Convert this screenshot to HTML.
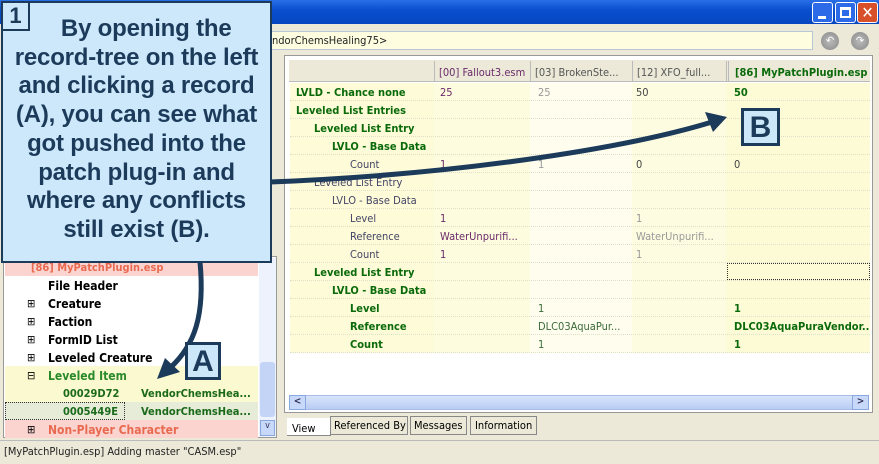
<!DOCTYPE html>
<html><head><meta charset="utf-8"><style>
*{margin:0;padding:0;box-sizing:border-box}
body{width:879px;height:464px;overflow:hidden;background:#ece9d8;font-family:"DejaVu Sans Condensed","Liberation Sans",sans-serif;font-size:11px;position:relative}
.a{position:absolute;white-space:nowrap}
.title{left:0;top:0;width:879px;height:24px;background:linear-gradient(#2a6fe6,#0a4fcf 40%,#0645c0)}
.wb{top:2px;width:21px;height:21px;border:1px solid #fff;border-radius:3px;background:#2c6ae8}
.addr{left:250px;top:31px;width:563px;height:19px;background:#fefde0;border:1px solid #b8c6d8;padding:2px 0 0 21px;font-size:11px;color:#222}
.circ{top:32px;width:18px;height:18px;border-radius:50%;background:radial-gradient(#bbb,#888);color:#fff;font-size:11px;text-align:center;line-height:18px}
.frame{left:284px;top:55px;width:589px;height:358px;border:1px solid #999;background:#fff}
.row{position:absolute;left:290px;width:580px;height:18px;border-bottom:1px dotted #e0e0c8}
.c{position:absolute;top:3px;font-size:11px}
.g{color:#0a6a0a;font-weight:bold}
.pu{color:#6a2a6a}
.gr{color:#999}
.tree{position:absolute;left:5px;width:253px;height:18px;font-weight:bold;font-size:11px;padding-top:3px}
</style></head><body>
<div class="a title"></div>
<div class="a wb" style="left:812px"><div style="position:absolute;left:5px;top:13px;width:8px;height:3px;background:#fff"></div></div>
<div class="a wb" style="left:835px"><div style="position:absolute;left:4px;top:4px;width:11px;height:11px;border:2px solid #fff;border-top-width:3px"></div></div>
<div class="a wb" style="left:857px;background:#d8502a;color:#fff;font-size:16px;text-align:center;line-height:19px;font-weight:bold">✕</div>
<div class="a addr">ndorChemsHealing75&gt;</div>
<div class="a circ" style="left:821px">↶</div>
<div class="a circ" style="left:851px">↷</div>

<div class="a frame"></div>
<div class="a" style="left:289px;top:60px;width:581px;height:22px;background:#ece9d8;border-bottom:1px solid #bbb"></div>
<div class="a" style="left:290px;top:83px;width:144px;height:270px;background:#fdfbd8"></div>
<div class="a" style="left:434px;top:83px;width:96px;height:270px;background:#fefcde"></div>
<div class="a" style="left:530px;top:83px;width:102px;height:270px;background:#fffeee"></div>
<div class="a" style="left:632px;top:83px;width:94px;height:270px;background:#fefce0"></div>
<div class="a" style="left:726px;top:83px;width:144px;height:270px;background:#fdfbd6"></div>
<div class="a" style="left:290px;top:353px;width:580px;height:42px;background:#fff"></div>
<div class="a" style="left:434px;top:61px;width:96px;height:21px;border-left:1px solid #bbb;padding:5px 0 0 4px;color:#6a2a6a">[00] Fallout3.esm</div>
<div class="a" style="left:530px;top:61px;width:102px;height:21px;border-left:1px solid #bbb;padding:5px 0 0 4px;color:#555">[03] BrokenSte...</div>
<div class="a" style="left:632px;top:61px;width:94px;height:21px;border-left:1px solid #bbb;padding:5px 0 0 4px;color:#555">[12] XFO_full...</div>
<div class="a" style="left:726px;top:61px;width:144px;height:21px;border-left:3px double #bbb;padding:5px 0 0 6px" ><span class="g">[86] MyPatchPlugin.esp</span></div>

<div class="row" style="top:83px"><span class="c g" style="left:6px">LVLD - Chance none</span><span class="c pu" style="left:150px">25</span><span class="c gr" style="left:248px">25</span><span class="c" style="left:346px;color:#444">50</span><span class="c g" style="left:444px">50</span></div>
<div class="row" style="top:101px"><span class="c g" style="left:6px">Leveled List Entries</span></div>
<div class="row" style="top:119px"><span class="c g" style="left:24px">Leveled List Entry</span></div>
<div class="row" style="top:137px"><span class="c g" style="left:42px">LVLO - Base Data</span></div>
<div class="row" style="top:155px"><span class="c" style="left:60px;color:#446">Count</span><span class="c pu" style="left:150px">1</span><span class="c gr" style="left:248px">1</span><span class="c" style="left:346px;color:#444">0</span><span class="c" style="left:444px;color:#444">0</span></div>
<div class="row" style="top:173px"><span class="c" style="left:24px;color:#446">Leveled List Entry</span></div>
<div class="row" style="top:191px"><span class="c" style="left:42px;color:#446">LVLO - Base Data</span></div>
<div class="row" style="top:209px"><span class="c" style="left:60px;color:#446">Level</span><span class="c pu" style="left:150px">1</span><span class="c gr" style="left:346px">1</span></div>
<div class="row" style="top:227px"><span class="c" style="left:60px;color:#446">Reference</span><span class="c pu" style="left:150px">WaterUnpurifi...</span><span class="c gr" style="left:346px">WaterUnpurifi...</span></div>
<div class="row" style="top:245px"><span class="c" style="left:60px;color:#446">Count</span><span class="c pu" style="left:150px">1</span><span class="c gr" style="left:346px">1</span></div>
<div class="row" style="top:263px"><span class="c g" style="left:24px">Leveled List Entry</span></div>
<div class="a" style="left:727px;top:263px;width:143px;height:17px;border:1px dotted #333"></div>
<div class="row" style="top:281px"><span class="c g" style="left:42px">LVLO - Base Data</span></div>
<div class="row" style="top:299px"><span class="c g" style="left:60px">Level</span><span class="c" style="left:248px;color:#3a6a3a">1</span><span class="c g" style="left:444px">1</span></div>
<div class="row" style="top:317px"><span class="c g" style="left:60px">Reference</span><span class="c" style="left:248px;color:#3a6a3a">DLC03AquaPur...</span><span class="c g" style="left:444px">DLC03AquaPuraVendor..</span></div>
<div class="row" style="top:335px"><span class="c g" style="left:60px">Count</span><span class="c" style="left:248px;color:#3a6a3a">1</span><span class="c g" style="left:444px">1</span></div>
<div class="a" style="left:289px;top:395px;width:580px;height:15px;background:linear-gradient(#d8e4fa,#b8ccf4);border:1px solid #a8bce4;border-radius:2px"></div>
<div class="a" style="left:852px;top:395px;width:17px;height:15px;background:#c8d8f8;border:1px solid #8aa8e0;color:#335;font-size:10px;text-align:center;font-weight:bold">&gt;</div>
<div class="a" style="left:289px;top:395px;width:17px;height:15px;background:#c8d8f8;border:1px solid #8aa8e0;color:#335;font-size:10px;text-align:center;font-weight:bold">&lt;</div>
<div class="a" style="left:287px;top:418px;width:44px;height:18px;padding:4px 0 0 5px;background:#fff;border-bottom:1px solid #888">View</div>
<div class="a" style="left:330px;top:416px;width:78px;height:19px;padding:2px 0 0 3px;border:1px solid #888">Referenced By</div>
<div class="a" style="left:410px;top:416px;width:57px;height:19px;padding:2px 0 0 3px;border:1px solid #888">Messages</div>
<div class="a" style="left:470px;top:416px;width:67px;height:19px;padding:2px 0 0 4px;border:1px solid #888">Information</div>

<div class="a" style="left:3px;top:256px;width:274px;height:182px;background:#fff;border:1px solid #999"></div>
<div class="tree" style="top:258px;background:#fbd4d0;color:#e86a50;padding-left:26px">[86] MyPatchPlugin.esp</div>
<div class="tree" style="top:276px;padding-left:43px;font-size:12px">File Header</div>
<div class="tree" style="top:294px;padding-left:43px;font-size:12px">Creature</div>
<div class="tree" style="top:312px;padding-left:43px;font-size:12px">Faction</div>
<div class="tree" style="top:330px;padding-left:43px;font-size:12px">FormID List</div>
<div class="tree" style="top:348px;padding-left:43px;font-size:12px">Leveled Creature</div>
<div class="tree" style="top:366px;padding-left:43px;background:#fbf9d0;color:#2a8a2a;font-size:12px">Leveled Item</div>
<div class="tree" style="top:384px;padding-left:58px;background:#fbf9d0;color:#1a6a1a">00029D72<span style="position:absolute;left:136px">VendorChemsHea...</span></div>
<div class="tree" style="top:402px;padding-left:58px;background:#e6ecd8;color:#1a6a1a"><span style="position:absolute;left:0;top:0;width:120px;height:18px;border:1px dotted #333"></span>0005449E<span style="position:absolute;left:136px">VendorChemsHea...</span></div>
<div class="tree" style="top:420px;padding-left:43px;background:#fbd4d0;color:#e86a50;font-size:12px">Non-Player Character</div>
<div class="a" style="left:27px;top:297px;font-size:11px">⊞</div>
<div class="a" style="left:27px;top:315px;font-size:11px">⊞</div>
<div class="a" style="left:27px;top:333px;font-size:11px">⊞</div>
<div class="a" style="left:27px;top:351px;font-size:11px">⊞</div>
<div class="a" style="left:27px;top:369px;font-size:11px">⊟</div>
<div class="a" style="left:27px;top:423px;font-size:11px">⊞</div>
<div class="a" style="left:259px;top:258px;width:17px;height:179px;background:#eef2fc"></div>
<div class="a" style="left:260px;top:362px;width:15px;height:55px;background:#c4d4f6;border-radius:3px"></div>
<div class="a" style="left:260px;top:420px;width:15px;height:16px;background:#c8d8f8;border:1px solid #8aa8e0;font-size:9px;text-align:center;color:#335">v</div>

<div class="a" style="left:0;top:440px;width:879px;height:24px;background:#ece9d8;border-top:1px solid #bbb;padding:4px 0 0 4px;font-size:11px;color:#222">[MyPatchPlugin.esp] Adding master "CASM.esp"</div>

<svg class="a" style="left:0;top:0" width="879" height="464">
<path d="M270 182 C 450 175 620 150 712 122" stroke="#1c3a5a" stroke-width="5" fill="none"/>
<polygon points="727,117 705,112 713,132" fill="#1c3a5a"/>
<path d="M200 262 C 205 315 195 345 170 368" stroke="#1c3a5a" stroke-width="5" fill="none"/>
<polygon points="157,379 165,358 180,372" fill="#1c3a5a"/>
</svg>
<div class="a" style="left:741px;top:108px;width:39px;height:38px;background:#cce8f8;border:3px solid #1c3a5a;font:bold 30px 'Liberation Sans',sans-serif;color:#1c3a5a;text-align:center;line-height:33px">B</div>
<div class="a" style="left:185px;top:342px;width:36px;height:38px;background:#cce8f8;border:3px solid #1c3a5a;font:bold 30px 'Liberation Sans',sans-serif;color:#1c3a5a;text-align:center;line-height:33px">A</div>

<div class="a" style="left:1px;top:1px;width:271px;height:262px;background:#cce8fa;border:2px solid #1c3a5a"></div>
<div class="a" style="left:1px;top:1px;width:29px;height:30px;border:2px solid #1c3a5a;background:#cce8fa;font:bold 22px 'Liberation Sans',sans-serif;color:#1c3a5a;text-align:center;line-height:26px">1</div>
<div class="a" style="left:2px;top:15px;width:269px;text-align:center;font:bold 24px/28.7px 'Liberation Sans',sans-serif;color:#1c3a5a;white-space:normal;letter-spacing:-0.2px">&nbsp;&nbsp;&nbsp;By opening the<br>record-tree on the left<br>and clicking a record<br>(A), you can see what<br>got pushed into the<br>patch plug-in and<br>where any conflicts<br>still exist (B).</div>
</body></html>
